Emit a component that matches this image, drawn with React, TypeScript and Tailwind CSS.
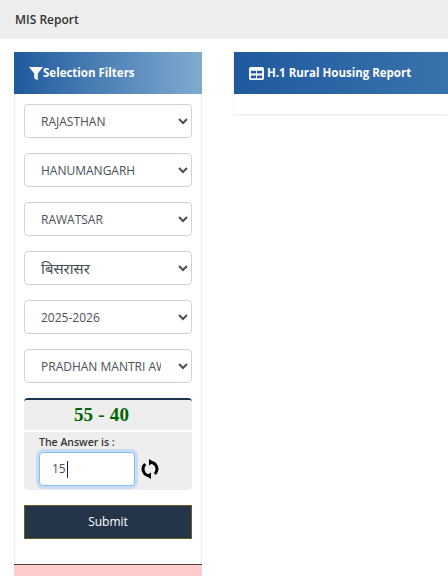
import React from "react";

const opts = ["RAJASTHAN", "HANUMANGARH", "RAWATSAR", "बिसरासर", "2025-2026", "PRADHAN MANTRI AWAAS YOJANA GRAMIN"];

export default function App() {
  return (
    <div className="h-[576px] w-[448px] overflow-hidden bg-white font-['Open_Sans','Noto_Sans','Noto_Sans_Devanagari',sans-serif] text-[#212529]">
      <div className="flex h-[39px] items-center bg-[#eeeeee] pl-[15px] text-[12px] font-semibold text-[#333]">MIS Report</div>
      <div className="flex items-start gap-[32px] pl-[14px] pt-[13px]">
        <div className="w-[188px] shrink-0 border-x border-[#eeeeee]">
          <div className="-mx-px flex h-[42px] items-center bg-gradient-to-r from-[#1f5a9e] to-[#7fabcf] pl-[15px] text-[11.5px] font-bold text-white">
            <svg viewBox="0 0 16 16" className="h-[15px] w-[14px] fill-white"><polygon points="0,0.5 16,0.5 10,8 10,16 6,13.500 6,8" /></svg>
            <span>Selection Filters</span>
          </div>
          <div className="flex flex-col gap-[15px] px-[9px] pt-[10px]">
            {opts.map((o) => (
              <select key={o} defaultValue={o} className={`h-[34px] w-full rounded-[4px] border border-[#ced4da] bg-white pl-[12px] pr-[14px] text-[#495057] ${o === "बिसरासर" ? "text-[15px]" : "text-[12px]"}`}>
                <option>{o}</option>
              </select>
            ))}
          </div>
          <div className="mx-[9px] mt-[15px] overflow-hidden rounded-[4px] border-t-2 border-[#1d3350]">
            <div className="flex h-[30px] items-center justify-center bg-[#eeeeee] pr-[13px] font-['Liberation_Serif',serif] text-[19px] font-bold tracking-[0.2px] text-[#006400]">55 - 40</div>
            <div className="mt-[2px] h-[58px] rounded-b-[4px] bg-[#eeeeee] pl-[15px] pt-[2px]">
              <div className="text-[10.5px] font-semibold leading-[16px] text-[#333]">The Answer is :</div>
              <div className="mt-[2px] flex items-center gap-[6px]">
                <div className="flex h-[34px] w-[96px] items-center rounded-[4px] border border-[#80bdff] bg-white pl-[12px] text-[12px] text-[#495057] shadow-[0_0_0_3px_rgba(0,123,255,0.15)]">
                  15<span className="ml-px h-[17px] w-px bg-[#222]" />
                </div>
                <svg viewBox="0 0 18 20" className="h-[20px] w-[18px] fill-none stroke-black">
                  <path d="M10 3.200A6.900 6.900 0 0 1 13.800 15" strokeWidth="3" />
                  <path d="M8 16.800A6.900 6.900 0 0 1 4.200 5" strokeWidth="3" />
                  <polygon points="8,0 8,6.500 13,3.200" className="fill-black stroke-none" />
                  <polygon points="10,13.500 10,20 5,16.800" className="fill-black stroke-none" />
                </svg>
              </div>
            </div>
          </div>
          <div className="px-[9px] pt-[15px]">
            <button className="h-[34px] w-full border border-[#6b5d1e] bg-[#243549] text-[12px] text-white">Submit</button>
          </div>
          <div className="-mx-px mt-[25px] h-[40px] border-t border-[#5a3a3a] bg-[#ffcccc]" />
        </div>
        <div className="min-w-0 flex-1 shadow-[0_1px_2px_rgba(0,0,0,0.1)]">
          <div className="flex h-[42px] items-center gap-[3px] bg-gradient-to-r from-[#1f5a9e] to-[#3a72ad] pl-[15px] text-[11.5px] font-bold text-white">
            <svg viewBox="0 0 512 512" className="h-[15px] w-[15px] fill-white"><path d="M64 32C28.700 32 0 60.700 0 96v320c0 35.300 28.700 64 64 64h384c35.300 0 64-28.700 64-64V96c0-35.300-28.700-64-64-64H64zm0 128h176v96H64v-96zm0 160h176v96H64v-96zm384 96H272v-96h176v96zm0-160H272v-96h176v96z" /></svg>
            <span className="whitespace-nowrap">H.1 Rural Housing Report</span>
          </div>
          <div className="h-[20px] bg-white" />
        </div>
      </div>
    </div>
  );
}
